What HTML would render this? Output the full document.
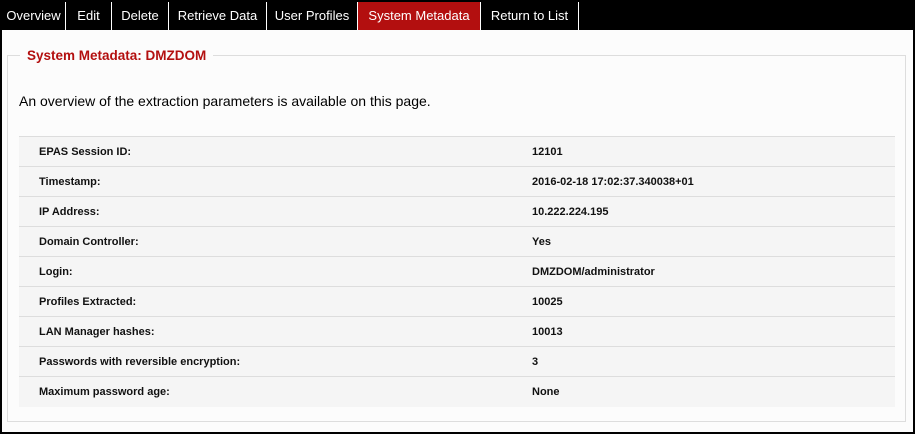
<!DOCTYPE html>
<html><head><style>
*{margin:0;padding:0;box-sizing:border-box}
body{width:916px;height:436px;background:#fff;font-family:"Liberation Sans",Arial,sans-serif;overflow:hidden}
.frame{position:absolute;left:0;top:0;width:915px;height:434px;border:2px solid #000;background:#fcfcfc}
.nav{position:absolute;left:2px;top:2px;width:911px;height:28px;background:#000}
.nav div{position:absolute;top:0;color:#fff;font-size:13px;line-height:28px;height:28px;border-right:1px solid #fff;text-align:center}
.nav .on{background:#b30f0f}
fieldset{position:absolute;left:7px;top:48px;width:899px;height:374px;border:1px solid #ddd;padding:0}
legend{margin-left:12px;padding:0 7px;color:#b30f0f;font-weight:bold;font-size:13.5px}
.intro{position:absolute;left:19px;top:93px;font-size:14px;color:#000}
table{position:absolute;left:19px;top:136px;width:876px;border-collapse:collapse;background:#f5f5f5}
td{height:30px;border-top:1px solid #ddd;font-size:11px;font-weight:bold;color:#111}
td:first-child{padding-left:20px;width:513px}
</style></head><body>
<div class="frame"></div>
<div class="nav">
<div style="left:0;width:64px">Overview</div>
<div style="left:64px;width:46px">Edit</div>
<div style="left:110px;width:57px">Delete</div>
<div style="left:167px;width:98px">Retrieve Data</div>
<div style="left:265px;width:91px">User Profiles</div>
<div class="on" style="left:356px;width:123px">System Metadata</div>
<div style="left:479px;width:98px">Return to List</div>
</div>
<fieldset><legend>System Metadata: DMZDOM</legend></fieldset>
<div class="intro">An overview of the extraction parameters is available on this page.</div>
<table>
<tr><td>EPAS Session ID:</td><td>12101</td></tr>
<tr><td>Timestamp:</td><td>2016-02-18 17:02:37.340038+01</td></tr>
<tr><td>IP Address:</td><td>10.222.224.195</td></tr>
<tr><td>Domain Controller:</td><td>Yes</td></tr>
<tr><td>Login:</td><td>DMZDOM/administrator</td></tr>
<tr><td>Profiles Extracted:</td><td>10025</td></tr>
<tr><td>LAN Manager hashes:</td><td>10013</td></tr>
<tr><td>Passwords with reversible encryption:</td><td>3</td></tr>
<tr><td>Maximum password age:</td><td>None</td></tr>
</table>
</body></html>
